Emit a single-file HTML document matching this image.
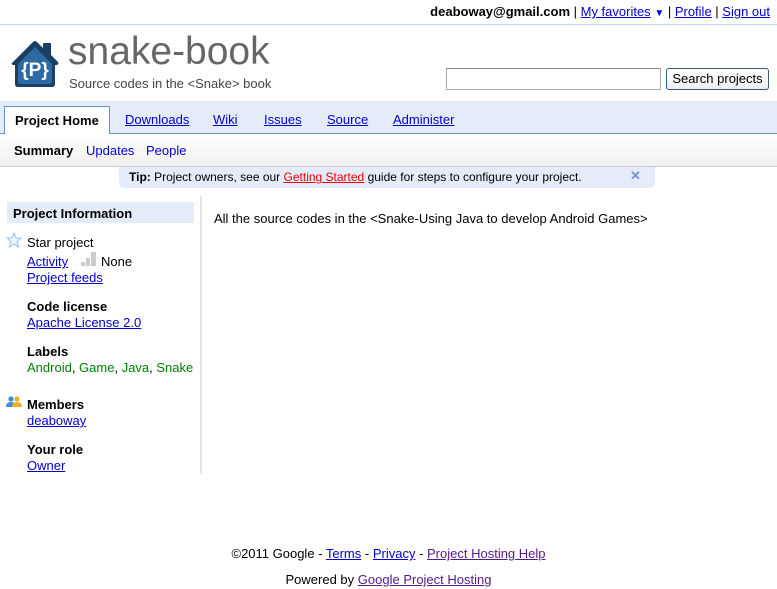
<!DOCTYPE html>
<html><head><meta charset="utf-8">
<style>
*{margin:0;padding:0;box-sizing:border-box}
body{width:777px;height:589px;background:#fff;font-family:"Liberation Sans",Arial,sans-serif;font-size:13px;color:#000;position:relative;overflow:hidden}
a{color:#00c;text-decoration:underline}
.abs{position:absolute;white-space:nowrap}
.lbl a{color:#008000;text-decoration:none}
</style></head><body>
<div class="abs" style="right:7px;top:4px;font-size:13px"><b>deaboway@gmail.com</b> | <a href="#">My favorites</a> <span style="color:#00c;font-size:10px">▼</span> | <a href="#">Profile</a> | <a href="#">Sign out</a></div>
<div class="abs" style="left:0;top:24px;width:777px;height:1px;background:#c3d9ff"></div>

<svg class="abs" style="left:11px;top:40px" width="49" height="48" viewBox="0 0 49 48">
<path d="M1 23 L22 2 Q24 0 26 2 L32 8 L32 4 Q32 3 33 3 L39 3 Q40 3 40 4 L40 15 L47 22 Q48 24 46 25 L44 25 L44 44 Q44 47 41 47 L7 47 Q4 47 4 44 L4 25 L2 25 Q0 24 1 23 Z" fill="#1a3f63"/>
<path d="M7 24 L24 7 L41 24 L41 42 Q41 44 39 44 L9 44 Q7 44 7 42 Z" fill="#2d6aa3"/>
<text x="24" y="36" text-anchor="middle" font-family="Liberation Sans" font-weight="bold" font-size="19" fill="#fff">{P}</text>
</svg>
<div class="abs" style="left:68px;top:30px;font-size:39px;color:#666">snake-book</div>
<div class="abs" style="left:69px;top:76px;font-size:13px;color:#444">Source codes in the &lt;Snake&gt; book</div>

<div class="abs" style="left:446px;top:68px;width:215px;height:22px;border:1px solid #aaa;border-top-color:#888"></div>
<div class="abs" style="left:666px;top:68px;width:103px;height:22px;border:1px solid #3a5a7a;border-radius:3px;background:linear-gradient(#fff,#eee);font-size:13px;text-align:center;line-height:20px">Search projects</div>

<div class="abs" style="left:0;top:101px;width:777px;height:33px;background:#e5ecf9;border-bottom:1px solid #6b90da"></div>
<div class="abs" style="left:4px;top:106px;width:106px;height:28px;background:#fff;border:1px solid #6b90da;border-bottom:none;font-weight:bold;padding:6px 0 0 10px">Project Home</div>
<div class="abs" style="left:125px;top:112px"><a href="#">Downloads</a></div>
<div class="abs" style="left:213px;top:112px"><a href="#">Wiki</a></div>
<div class="abs" style="left:264px;top:112px"><a href="#">Issues</a></div>
<div class="abs" style="left:327px;top:112px"><a href="#">Source</a></div>
<div class="abs" style="left:393px;top:112px"><a href="#">Administer</a></div>

<div class="abs" style="left:0;top:134px;width:777px;height:33px;background:linear-gradient(#fff,#f0f0f0);border-bottom:1px solid #ccc"></div>
<div class="abs" style="left:14px;top:143px"><b>Summary</b></div>
<div class="abs" style="left:86px;top:143px;color:#00c">Updates</div>
<div class="abs" style="left:146px;top:143px;color:#00c">People</div>

<div class="abs" style="left:119px;top:167px;width:536px;height:21px;background:#e5ecf9;border-radius:0 0 5px 5px;font-size:12px;padding:3px 0 0 10px"><b>Tip:</b> Project owners, see our <a href="#" style="color:#e00">Getting Started</a> guide for steps to configure your project.</div>
<div class="abs" style="left:630px;top:168px;color:#7b8fd8;font-weight:bold;font-size:13px">✕</div>

<div class="abs" style="left:7px;top:202px;width:187px;height:21px;background:#e5ecf9;font-weight:bold;padding:4px 0 0 6px">Project Information</div>
<div class="abs" style="left:200px;top:196px;width:2px;height:278px;background:#e4e4e4"></div>
<svg class="abs" style="left:6px;top:232px" width="16" height="16" viewBox="0 0 16 16"><path d="M8 1 L10 6 L15 6 L11 9.5 L12.5 15 L8 12 L3.5 15 L5 9.5 L1 6 L6 6 Z" fill="#eef5ff" stroke="#9cc0ea"/></svg>
<div class="abs" style="left:27px;top:235px">Star project</div>
<div class="abs" style="left:27px;top:254px"><a href="#">Activity</a></div>
<div class="abs" style="left:81px;top:252px;width:16px;height:14px"><span style="position:absolute;left:0;bottom:0;width:4px;height:4px;background:#ccc"></span><span style="position:absolute;left:5px;bottom:0;width:4px;height:8px;background:#ccc"></span><span style="position:absolute;left:10px;bottom:0;width:5px;height:14px;background:#ccc"></span></div>
<div class="abs" style="left:101px;top:254px">None</div>
<div class="abs" style="left:27px;top:270px"><a href="#">Project feeds</a></div>
<div class="abs" style="left:27px;top:299px"><b>Code license</b></div>
<div class="abs" style="left:27px;top:315px"><a href="#">Apache License 2.0</a></div>
<div class="abs" style="left:27px;top:344px"><b>Labels</b></div>
<div class="abs lbl" style="left:27px;top:360px"><a href="#">Android</a>, <a href="#">Game</a>, <a href="#">Java</a>, <a href="#">Snake</a></div>
<svg class="abs" style="left:6px;top:396px" width="17" height="12" viewBox="0 0 17 12"><circle cx="5" cy="3" r="2.6" fill="#3b8fd8"/><path d="M0 11 Q0 6 5 6 Q10 6 10 11Z" fill="#3b8fd8"/><circle cx="11" cy="3" r="2.6" fill="#f0b020"/><path d="M6 11 Q6 6 11 6 Q16 6 16 11Z" fill="#f0b020"/></svg>
<div class="abs" style="left:27px;top:397px"><b>Members</b></div>
<div class="abs" style="left:27px;top:413px"><a href="#">deaboway</a></div>
<div class="abs" style="left:27px;top:442px"><b>Your role</b></div>
<div class="abs" style="left:27px;top:458px"><a href="#">Owner</a></div>

<div class="abs" style="left:214px;top:211px">All the source codes in the &lt;Snake-Using Java to develop Android Games&gt;</div>

<div class="abs" style="left:0;width:777px;text-align:center;top:546px">©2011 Google - <a href="#">Terms</a> - <a href="#">Privacy</a> - <a href="#" style="color:#551a8b">Project Hosting Help</a></div>
<div class="abs" style="left:0;width:777px;text-align:center;top:572px">Powered by <a href="#" style="color:#551a8b">Google Project Hosting</a></div>
</body></html>
